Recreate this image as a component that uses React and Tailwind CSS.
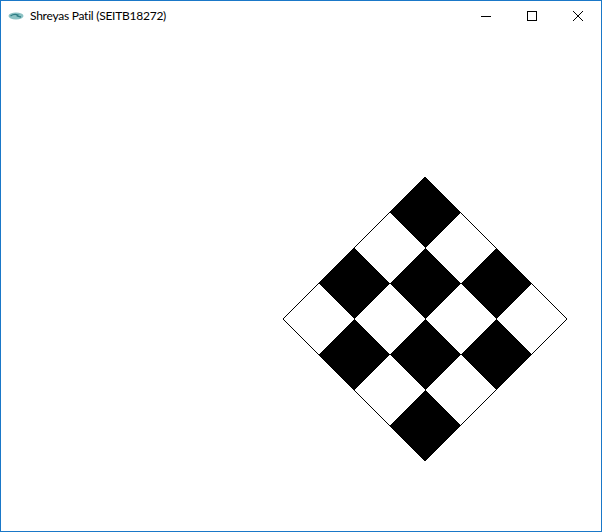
const cx = 424;
const top = 146;
const s = 35.5;

const pt = (i, j) => [cx + (i - j) * s, top + (i + j) * s];

const cells = [];
for (let i = 0; i < 4; i++) {
  for (let j = 0; j < 4; j++) {
    if ((i + j) % 2 === 0) {
      const p = [pt(i, j), pt(i + 1, j), pt(i + 1, j + 1), pt(i, j + 1)];
      cells.push(p.map((q) => q.join(",")).join(" "));
    }
  }
}

const outline = [pt(0, 0), pt(4, 0), pt(4, 4), pt(0, 4)].map((q) => q.join(",")).join(" ");

export default function App() {
  return (
    <div className="w-[602px] h-[532px] border border-[#1a78c8] bg-white flex flex-col overflow-hidden">
      {/* title bar */}
      <div className="h-[30px] flex items-center shrink-0">
        <svg width="16" height="10" viewBox="0 0 16 10" className="ml-[7px]">
          <ellipse cx="8" cy="5" rx="7.5" ry="3.4" fill="#8cc2c4" />
          <path d="M2.5 5 Q6 2.5 10 4 Q7 5 13 6" stroke="#2e7d84" strokeWidth="1.3" fill="none" />
        </svg>
        <span className="ml-[6px] text-[12px] tracking-[-0.25px] text-black" style={{ fontFamily: "Lato, 'Noto Sans', sans-serif" }}>
          Shreyas Patil (SEITB18272)
        </span>
        <div className="ml-auto flex h-full">
          <div className="w-[46px] flex items-center justify-center">
            <div className="w-[10px] h-px bg-black" />
          </div>
          <div className="w-[46px] flex items-center justify-center">
            <div className="w-[10px] h-[10px] border border-black" />
          </div>
          <div className="w-[46px] flex items-center justify-center">
            <svg width="10" height="10" viewBox="0 0 10 10">
              <path d="M0 0 L10 10 M10 0 L0 10" stroke="black" strokeWidth="1" />
            </svg>
          </div>
        </div>
      </div>
      {/* canvas */}
      <div className="flex-1">
        <svg width="600" height="500" shapeRendering="crispEdges">
          <polygon points={outline} fill="white" stroke="black" strokeWidth="1" />
          {cells.map((c, k) => (
            <polygon key={k} points={c} fill="black" />
          ))}
        </svg>
      </div>
    </div>
  );
}
